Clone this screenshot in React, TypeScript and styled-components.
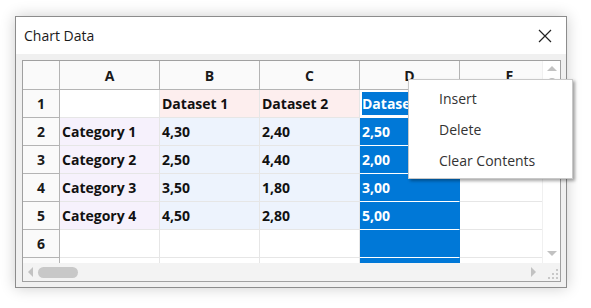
import { Fragment } from 'react'
import styled, { createGlobalStyle } from 'styled-components'

const GlobalStyle = createGlobalStyle`
  html, body {
    margin: 0;
    padding: 0;
    background: #ffffff;
    font-family: 'Open Sans', 'Noto Sans', sans-serif;
  }
`

const Page = styled.div`
  width: 591px;
  height: 308px;
  padding: 16px 0 0 15px;
  box-sizing: border-box;
  overflow: hidden;
`

const Window = styled.div`
  position: relative;
  width: 552px;
  height: 272px;
  box-sizing: border-box;
  border: 1px solid #8c8c8c;
  background: #f0f0f0;
  box-shadow: 0 0 14px rgba(0, 0, 0, 0.2);
  display: flex;
  flex-direction: column;
`

const TitleBar = styled.div`
  height: 37px;
  background: #ffffff;
  display: flex;
  align-items: center;
  justify-content: space-between;
  padding: 0 13px 0 8px;
  flex-shrink: 0;
`

const Title = styled.span`
  font-size: 14px;
  color: #1a1a1a;
`

const CloseButton = styled.button`
  border: none;
  background: transparent;
  padding: 0;
  width: 16px;
  height: 16px;
  display: flex;
  align-items: center;
  justify-content: center;
`

const Body = styled.div`
  flex: 1;
  min-height: 0;
  padding: 6px 5px 5px 6px;
  display: flex;
`

const GridFrame = styled.div`
  flex: 1;
  border: 1px solid #a0a0a0;
  background: #ffffff;
  display: grid;
  grid-template-columns: minmax(0, 1fr) 18px;
  grid-template-rows: minmax(0, 1fr) 18px;
  overflow: hidden;
`

const Cells = styled.div`
  overflow: hidden;
  min-height: 0;
  display: grid;
  grid-template-columns: 37px repeat(5, 100px);
  grid-template-rows: 29px repeat(7, 28px);
  font-size: 14px;
  font-weight: 700;
`

type CellKind = 'plain' | 'series' | 'category' | 'value' | 'selected' | 'active'

const cellBg: Record<CellKind, string> = {
  plain: '#ffffff',
  series: '#fdeeee',
  category: '#f6f1fc',
  value: '#edf3fd',
  selected: '#0078d7',
  active: '#0078d7'
}

const HeadCell = styled.div`
  background: #fafafa;
  border-right: 1px solid #b4b4b4;
  border-bottom: 1px solid #b4b4b4;
  display: flex;
  align-items: center;
  justify-content: center;
  color: #1a1a1a;
`

const Cell = styled.div<{ $kind: CellKind }>`
  background: ${p => cellBg[p.$kind]};
  border-right: 1px solid ${p => (p.$kind === 'selected' || p.$kind === 'active' ? '#0078d7' : '#e6e6e6')};
  border-bottom: 1px solid ${p => (p.$kind === 'selected' || p.$kind === 'active' ? '#ffffff' : '#e6e6e6')};
  box-shadow: ${p => (p.$kind === 'active' ? 'inset 0 0 0 2px #ffffff' : 'none')};
  color: ${p => (p.$kind === 'selected' || p.$kind === 'active' ? '#ffffff' : '#111111')};
  display: flex;
  align-items: center;
  padding-left: 2px;
  white-space: nowrap;
  overflow: hidden;
`

const VScroll = styled.div`
  background: #ffffff;
  border-left: 1px solid #f0f0f0;
  display: flex;
  flex-direction: column;
  align-items: center;
  justify-content: space-between;
  padding: 5px 0 7px;
  position: relative;
`

const VThumb = styled.div`
  position: absolute;
  top: 17px;
  left: 5px;
  width: 8px;
  height: 70px;
  border-radius: 4px;
  background: #c2c2c2;
`

const HScroll = styled.div`
  background: #f3f3f3;
  display: flex;
  align-items: center;
  padding: 0 6px 0 5px;
  gap: 5px;
`

const HThumb = styled.div`
  width: 40px;
  height: 11px;
  border-radius: 6px;
  background: #c8c8c8;
`

const Spacer = styled.div`
  flex: 1;
`

const Corner = styled.div`
  background: #f3f3f3;
  display: flex;
  align-items: flex-end;
  justify-content: flex-end;
`

const Menu = styled.div`
  position: absolute;
  left: 392px;
  top: 62px;
  width: 165px;
  box-sizing: border-box;
  padding: 3px 0 2px;
  background: #ffffff;
  border: 1px solid #c8c8c8;
  box-shadow: 2px 2px 3px rgba(0, 0, 0, 0.35);
`

const MenuItem = styled.div`
  height: 31px;
  display: flex;
  align-items: center;
  padding-left: 30px;
  font-size: 14px;
  color: #333333;
`

const cols = ['A', 'B', 'C', 'D', 'E']

// row 7 is only a sliver under the scrollbar, so its label is not drawn
const rows: { id: string; label: string; cells: [string, CellKind][] }[] = [
  { id: 'r1', label: '1', cells: [['', 'plain'], ['Dataset 1', 'series'], ['Dataset 2', 'series'], ['Dataset 3', 'active'], ['', 'plain']] },
  { id: 'r2', label: '2', cells: [['Category 1', 'category'], ['4,30', 'value'], ['2,40', 'value'], ['2,50', 'selected'], ['', 'plain']] },
  { id: 'r3', label: '3', cells: [['Category 2', 'category'], ['2,50', 'value'], ['4,40', 'value'], ['2,00', 'selected'], ['', 'plain']] },
  { id: 'r4', label: '4', cells: [['Category 3', 'category'], ['3,50', 'value'], ['1,80', 'value'], ['3,00', 'selected'], ['', 'plain']] },
  { id: 'r5', label: '5', cells: [['Category 4', 'category'], ['4,50', 'value'], ['2,80', 'value'], ['5,00', 'selected'], ['', 'plain']] },
  { id: 'r6', label: '6', cells: [['', 'plain'], ['', 'plain'], ['', 'plain'], ['', 'selected'], ['', 'plain']] },
  { id: 'r7', label: '', cells: [['', 'plain'], ['', 'plain'], ['', 'plain'], ['', 'selected'], ['', 'plain']] }
]

const Arrow = ({ dir }: { dir: 'up' | 'down' | 'left' | 'right' }) => {
  const pts = {
    up: '0,5 5,0 10,5',
    down: '0,0 10,0 5,5',
    left: '5,0 5,10 0,5',
    right: '0,0 5,5 0,10'
  }[dir]
  const vertical = dir === 'up' || dir === 'down'
  return (
    <svg width={vertical ? 10 : 5} height={vertical ? 5 : 10} viewBox={vertical ? '0 0 10 5' : '0 0 5 10'}>
      <polygon points={pts} fill="#c2c2c2" />
    </svg>
  )
}

const Grip = () => (
  <svg width="12" height="12" viewBox="0 0 12 12">
    {[
      [8, 0],
      [8, 4],
      [4, 4],
      [8, 8],
      [4, 8],
      [0, 8]
    ].map(([x, y]) => (
      <rect key={`${x}-${y}`} x={x} y={y} width="2" height="2" fill="#c8c8c8" />
    ))}
  </svg>
)

export default function App() {
  return (
    <>
      <GlobalStyle />
      <Page>
        <Window>
          <TitleBar>
            <Title>Chart Data</Title>
            <CloseButton aria-label="Close">
              <svg width="14" height="14" viewBox="0 0 14 14">
                <path d="M1 1 L13 13 M13 1 L1 13" stroke="#222" strokeWidth="1.2" />
              </svg>
            </CloseButton>
          </TitleBar>
          <Body>
            <GridFrame>
              <Cells>
                <HeadCell />
                {cols.map(c => (
                  <HeadCell key={c}>{c}</HeadCell>
                ))}
                {rows.map(r => (
                  <Fragment key={r.id}>
                    <HeadCell>{r.label}</HeadCell>
                    {r.cells.map(([text, kind], i) => (
                      <Cell key={i} $kind={kind}>
                        {text}
                      </Cell>
                    ))}
                  </Fragment>
                ))}
              </Cells>
              <VScroll>
                <Arrow dir="up" />
                <VThumb />
                <Arrow dir="down" />
              </VScroll>
              <HScroll>
                <Arrow dir="left" />
                <HThumb />
                <Spacer />
                <Arrow dir="right" />
              </HScroll>
              <Corner>
                <Grip />
              </Corner>
            </GridFrame>
          </Body>
          <Menu>
            <MenuItem>Insert</MenuItem>
            <MenuItem>Delete</MenuItem>
            <MenuItem>Clear Contents</MenuItem>
          </Menu>
        </Window>
      </Page>
    </>
  )
}
